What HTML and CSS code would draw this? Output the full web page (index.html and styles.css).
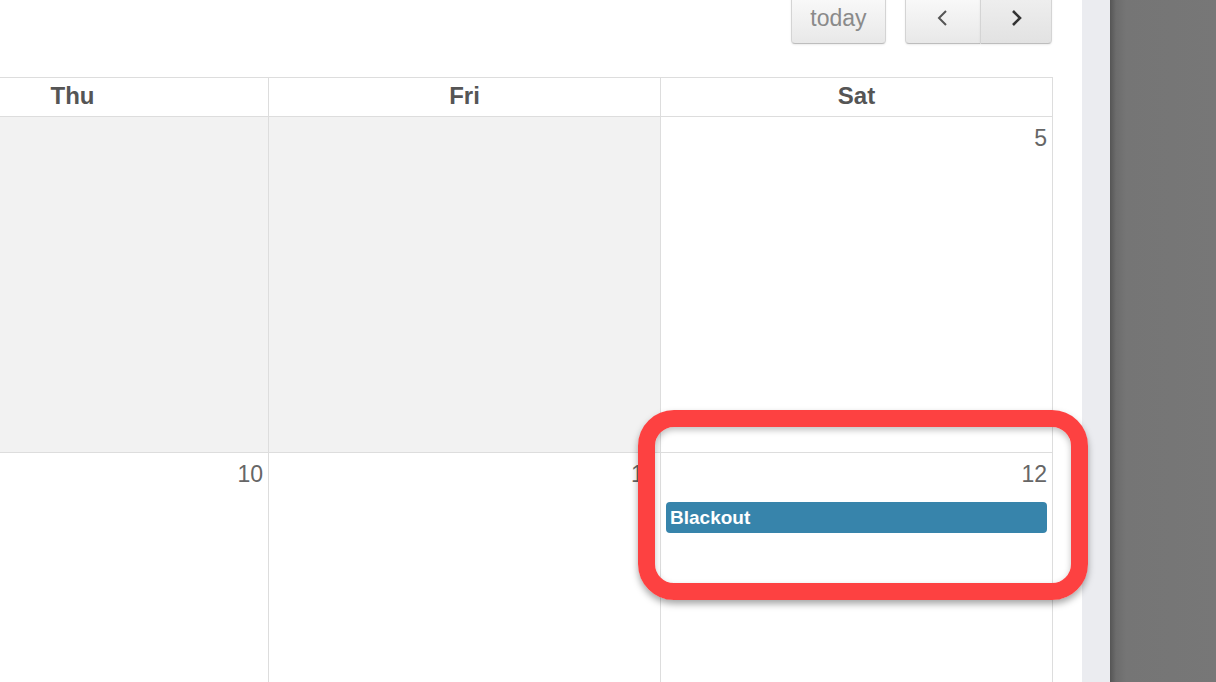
FILE: index.html
```html
<!DOCTYPE html>
<html lang="en">
<head>
<meta charset="utf-8">
<title>Calendar</title>
<link rel="stylesheet" href="styles.css">
</head>
<body>
<div class="screen">
  <main class="calendar-pane">
    <div class="toolbar">
      <button class="btn btn-today" type="button">today</button>
      <div class="btn-group">
        <button class="btn btn-prev" type="button" aria-label="prev">
          <svg width="14" height="18" viewBox="0 0 14 18"><path d="M10 2 L3 9 L10 16" fill="none" stroke="#555" stroke-width="2"/></svg>
        </button>
        <button class="btn btn-next" type="button" aria-label="next">
          <svg width="14" height="18" viewBox="0 0 14 18"><path d="M4 2 L11 9 L4 16" fill="none" stroke="#333" stroke-width="2.6"/></svg>
        </button>
      </div>
    </div>
    <div class="month">
      <div class="head">Thu</div>
      <div class="head">Fri</div>
      <div class="head">Sat</div>

      <div class="day other"></div>
      <div class="day other"></div>
      <div class="day"><span class="num">5</span></div>

      <div class="day week2"><span class="num">10</span></div>
      <div class="day week2"><span class="num">11</span></div>
      <div class="day week2">
        <span class="num">12</span>
        <div class="event">Blackout</div>
      </div>
    </div>
  </main>
  <div class="gutter"></div>
  <div class="backdrop"></div>
  <div class="callout"></div>
</div>
</body>
</html>
```

FILE: styles.css
```css
html, body {
  margin: 0;
  padding: 0;
  background: #fff;
  overflow: hidden;
}

.screen {
  position: relative;
  display: flex;
  width: 1216px;
  height: 682px;
  overflow: hidden;
  font-family: "Liberation Sans", Arial, sans-serif;
}

.calendar-pane {
  width: 1082px;
  flex: none;
  background: #fff;
  overflow: hidden;
}

.toolbar {
  height: 77px;
  display: flex;
  justify-content: flex-end;
  align-items: flex-start;
  gap: 19px;
  padding-right: 30px;
  box-sizing: border-box;
}

.btn {
  margin: 0;
  padding: 0;
  border: 1px solid #d4d4d4;
  border-bottom-color: #bdbdbd;
  background: linear-gradient(#fbfbfb, #e8e8e8);
  box-shadow: 0 1px 2px rgba(0, 0, 0, 0.08);
  font-family: "Liberation Sans", Arial, sans-serif;
  color: #8a8a8a;
  display: flex;
  align-items: center;
  justify-content: center;
}

.btn-today {
  margin-top: -8px;
  width: 95px;
  height: 52px;
  border-radius: 0 0 4px 4px;
  font-size: 23px;
  line-height: 1;
}

.btn-group {
  display: flex;
  margin-top: -8px;
}

.btn-prev,
.btn-next {
  height: 52px;
}

.btn-prev {
  width: 75px;
  border-radius: 0 0 0 4px;
  border-right: none;
}

.btn-next {
  width: 72px;
  border-radius: 0 0 4px 0;
  background: linear-gradient(#f0f0f0, #e2e2e2);
}

.month {
  display: grid;
  grid-template-columns: 392px 392px 392px;
  grid-template-rows: 39px 336px 300px;
  margin-left: -124px;
  width: 1177px;
  border-top: 1px solid #ddd;
  border-right: 1px solid #ddd;
  box-sizing: border-box;
}

.head {
  border-left: 1px solid #ddd;
  border-bottom: 1px solid #ddd;
  text-align: center;
  font-weight: bold;
  font-size: 24px;
  color: #555;
  line-height: 36px;
}

.day {
  border-left: 1px solid #ddd;
  border-bottom: 1px solid #ddd;
  display: flex;
  flex-direction: column;
  align-items: stretch;
}

.day.other {
  background: #f2f2f2;
}

.num {
  align-self: flex-end;
  font-size: 23px;
  color: #666;
  padding: 8px 5px 0 0;
  line-height: 26px;
}

.event {
  margin: 15px 5px 0 5px;
  height: 31px;
  background: #3784ab;
  border-radius: 4px;
  color: #fff;
  font-weight: bold;
  font-size: 19px;
  line-height: 31px;
  padding-left: 4px;
}

.gutter {
  width: 28px;
  flex: none;
  background: #ebecf0;
}

.backdrop {
  flex: 1;
  background: linear-gradient(to right, #555 0px, #6c6c6c 6px, #757575 16px, #777 100%);
}

/* highlight frame drawn over the Saturday cell */
.callout {
  position: absolute;
  left: 638px;
  top: 410px;
  width: 450px;
  height: 190px;
  box-sizing: border-box;
  border: 17px solid #fd4141;
  border-radius: 36px;
  box-shadow: 0 4px 7px rgba(0, 0, 0, 0.35), inset 0 3px 6px rgba(0, 0, 0, 0.25);
}
```
